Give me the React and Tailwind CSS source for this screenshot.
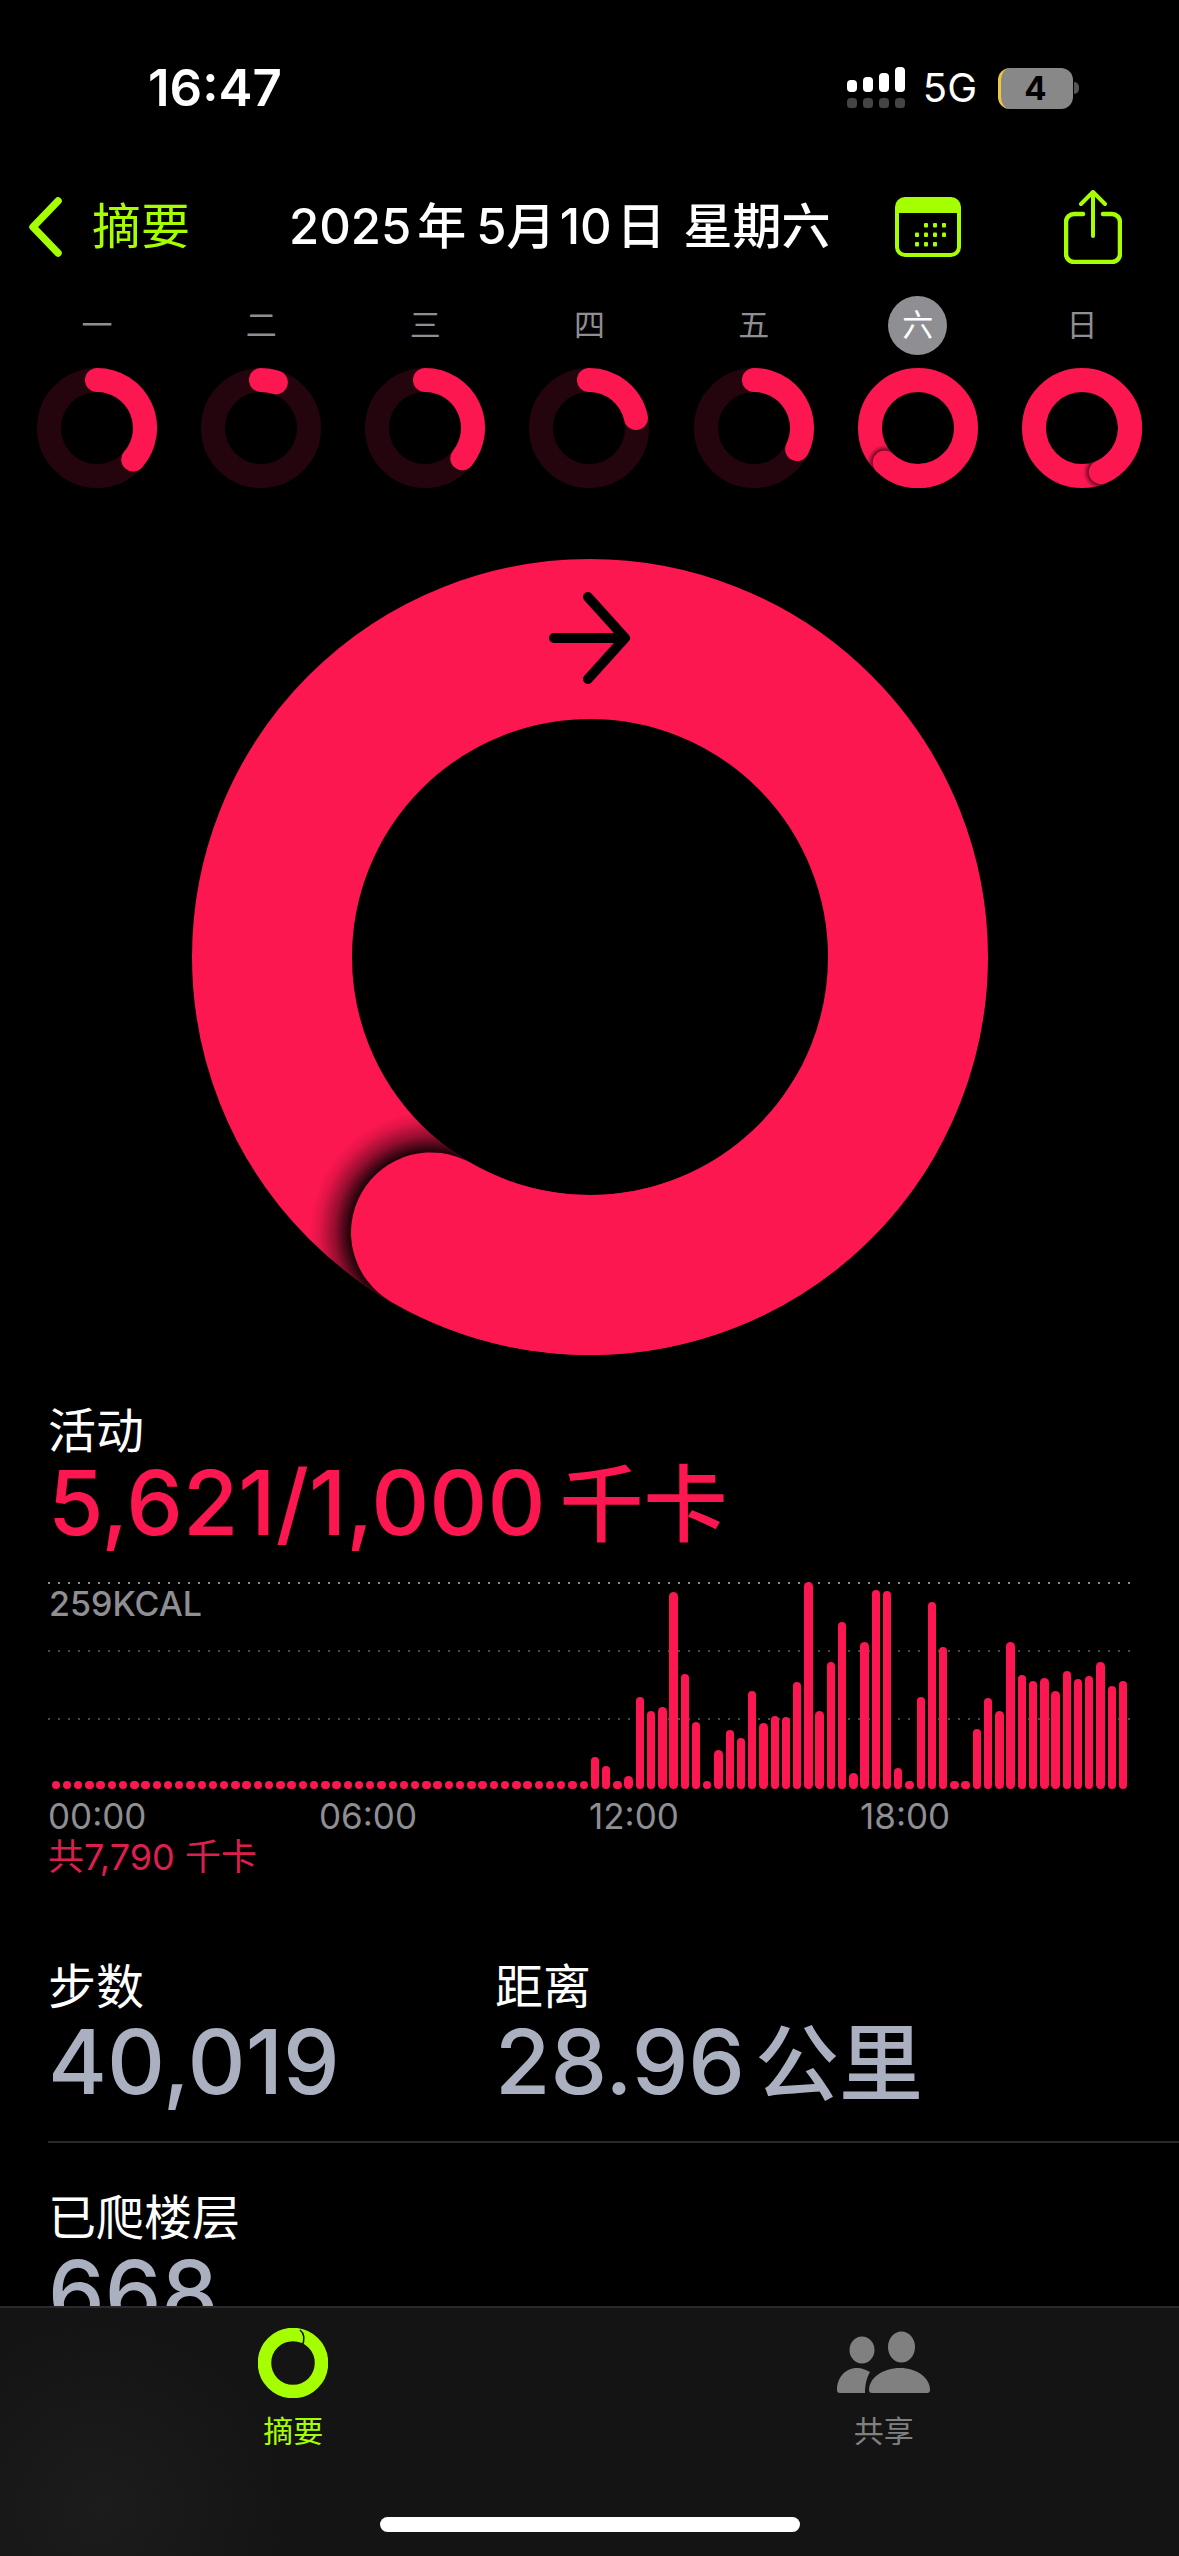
import React from "react";

const RED = "#fc1750";
const GREEN = "#a6ff00";
const FONT = "font-['Inter','Noto_Sans_CJK_SC',sans-serif]";

function pt(c, r, deg) {
  const a = ((deg - 90) * Math.PI) / 180;
  return [c + r * Math.cos(a), c + r * Math.sin(a)];
}
function arc(c, r, from, to) {
  const [x1, y1] = pt(c, r, from);
  const [x2, y2] = pt(c, r, to);
  const large = to - from > 180 ? 1 : 0;
  return `M${x1} ${y1}A${r} ${r} 0 ${large} 1 ${x2} ${y2}`;
}

function Ring({ size, stroke, end, id, track, shadow = 0.9 }) {
  const c = size / 2;
  const r = c - stroke / 2;
  const over = end > 360;
  const lap = end % 360;
  const [cx, cy] = pt(c, r, lap);
  const glow = stroke * 0.76;
  const edge = stroke / 2 / glow;
  return (
    <svg width={size} height={size} viewBox={`0 0 ${size} ${size}`} className="block shrink-0">
      <defs>
        <radialGradient id={`g${id}`}>
          <stop offset={edge} stopColor="#000" stopOpacity={shadow} />
          <stop offset={edge + (1 - edge) * 0.4} stopColor="#000" stopOpacity={shadow * 0.45} />
          <stop offset={edge + (1 - edge) * 0.75} stopColor="#000" stopOpacity={shadow * 0.12} />
          <stop offset="1" stopColor="#000" stopOpacity="0" />
        </radialGradient>
        <clipPath id={`c${id}`}>
          <path
            clipRule="evenodd"
            d={`M0 ${c}a${c} ${c} 0 1 0 ${size} 0a${c} ${c} 0 1 0 ${-size} 0zM${stroke} ${c}a${c - stroke} ${c - stroke} 0 1 0 ${size - 2 * stroke} 0a${c - stroke} ${c - stroke} 0 1 0 ${-(size - 2 * stroke)} 0z`}
          />
        </clipPath>
      </defs>
      <circle cx={c} cy={c} r={r} fill="none" stroke={over ? RED : track} strokeWidth={stroke} />
      {over ? (
        <>
          <g clipPath={`url(#c${id})`}>
            <circle cx={cx} cy={cy} r={glow} fill={`url(#g${id})`} />
          </g>
          <path d={arc(c, r, lap - 90, lap)} fill="none" stroke={RED} strokeWidth={stroke} strokeLinecap="round" />
        </>
      ) : (
        <path d={arc(c, r, 0, end)} fill="none" stroke={RED} strokeWidth={stroke} strokeLinecap="round" />
      )}
    </svg>
  );
}

const days = [
  ["一", 131],
  ["二", 18],
  ["三", 129],
  ["四", 78],
  ["五", 116],
  ["六", 584],
  ["日", 517],
];

const tops = [665, 595, 622, 665, 650, 415, 455, 445, 100, 345, 488, 665, 573, 513, 537, 397, 493, 472, 475, 370, 70, 455, 308, 190, 642, 250, 92, 95, 628, 665, 415, 130, 265, 665, 665, 510, 418, 456, 250, 348, 367, 356, 396, 335, 360, 351, 308, 380, 367];
const bars = [...Array(47).fill(8.4), ...tops.map((t) => (690 - t) / 3)];

function GridLine({ color }) {
  return <div className={`h-[2px] w-full bg-[length:10px_2px] ${color}`} />;
}

function Stat({ label, children, className = "" }) {
  return (
    <div className={className}>
      <div className="text-[48px] leading-[60px] text-white">{label}</div>
      <div className="text-[90px] leading-[90px] font-medium whitespace-nowrap text-[#aab0c0]">{children}</div>
    </div>
  );
}

export default function App() {
  return (
    <div className={`flex h-[2556px] w-[1179px] flex-col overflow-hidden bg-black ${FONT}`}>
      <div className="min-h-0 flex-1 overflow-hidden">
        {/* status bar */}
        <div className="flex h-[170px] items-start justify-between pt-[62px] pr-[100px] pl-[148px]">
          <span className="text-[51px] leading-[52px] font-semibold text-white">16:47</span>
          <div className="flex items-center pt-[5px]">
            <svg width="60" height="42" viewBox="0 0 60 42" className="mr-[16px]">
              <g fill="#fff">
                <rect x="0" y="13" width="10" height="12" rx="4" />
                <rect x="16" y="10" width="10" height="15" rx="4" />
                <rect x="32" y="6" width="10" height="19" rx="4" />
                <rect x="48" y="0" width="10" height="25" rx="4" />
              </g>
              <g fill="#444">
                <rect x="0" y="31" width="10" height="10" rx="3.5" />
                <rect x="16" y="31" width="10" height="10" rx="3.5" />
                <rect x="32" y="31" width="10" height="10" rx="3.5" />
                <rect x="48" y="31" width="10" height="10" rx="3.5" />
              </g>
            </svg>
            <span className="mr-[21px] text-[40px] leading-[42px] font-normal text-white">5G</span>
            <div className="flex h-[41px] w-[75px] items-center justify-center rounded-[12px] border-l-[3px] border-[#f0c840] bg-[#888888] pr-[3px] text-[33px] leading-none font-bold text-black">
              4
            </div>
            <div className="ml-[1px] h-[12px] w-[5px] rounded-r-full bg-[#555]" />
          </div>
        </div>

        {/* nav */}
        <div className="flex h-[114px] items-center pl-[28px]">
          <svg width="34" height="60" viewBox="0 0 34 60" className="mr-[30px] shrink-0">
            <path d="M30 4 5 30l25 26" fill="none" stroke={GREEN} strokeWidth="7.5" strokeLinecap="round" strokeLinejoin="round" />
          </svg>
          <span className="w-[197px] shrink-0 text-[49px] leading-[60px]" style={{ color: GREEN }}>摘要</span>
          <span className="w-[606px] shrink-0 text-[49px] leading-[60px] font-medium whitespace-nowrap text-white">
            2025
            <span className="ml-[6px]">年</span>
            <span className="ml-[10px]">5月</span>
            <span className="ml-[4px]">10</span>
            <span className="ml-[5px]">日</span>
            <span className="ml-[18px]">星期六</span>
          </span>
          <svg width="66" height="60" viewBox="0 0 66 60" className="mr-[103px] shrink-0">
            <rect x="2" y="2" width="62" height="56" rx="8" fill="none" stroke={GREEN} strokeWidth="4" />
            <path d="M2 16V10a8 8 0 0 1 8-8h46a8 8 0 0 1 8 8v6z" fill={GREEN} />
            <g fill={GREEN}>
              {[0, 1, 2].map((row) =>
                [0, 1, 2, 3].map((col) =>
                  row === 0 && col === 0 ? null : row === 2 && col === 3 ? null : (
                    <rect key={`${row}${col}`} x={20 + col * 9} y={26 + row * 9.5} width="4" height="4.5" rx="1" />
                  )
                )
              )}
            </g>
          </svg>
          <svg width="58" height="74" viewBox="0 0 58 74" className="shrink-0">
            <path d="M19 24h-9a8 8 0 0 0-8 8v32a8 8 0 0 0 8 8h38a8 8 0 0 0 8-8V32a8 8 0 0 0-8-8h-9" fill="none" stroke={GREEN} strokeWidth="4.5" strokeLinecap="round" />
            <path d="M29 46V3M17 14 29 2l12 12" fill="none" stroke={GREEN} strokeWidth="4" strokeLinecap="round" strokeLinejoin="round" />
          </svg>
        </div>

        {/* week */}
        <div className="mt-[12px] grid grid-cols-7 px-[15px]">
          {days.map(([d, end], i) => (
            <div key={d} className="flex flex-col items-center">
              <div
                className={`flex h-[59px] w-[59px] items-center justify-center rounded-full text-[31px] ${i === 5 ? "bg-[#8e8e93] text-white" : "text-[#8e8e93]"}`}
              >
                {d}
              </div>
              <div className="mt-[13px]">
                <Ring size={120} stroke={24} end={end} id={`d${i}`} track="#24040d" shadow={0.6} />
              </div>
            </div>
          ))}
        </div>

        {/* main ring */}
        <div className="mt-[71px] flex justify-center">
          <div className="relative h-[796px] w-[796px]">
            <Ring size={796} stroke={160} end={570} id="main" track="#24040d" />
            <svg width="84" height="96" viewBox="0 0 84 96" className="absolute top-[31px] left-[356px]">
              <path d="M6 48h70M40 7l37 41-37 41" fill="none" stroke="#000" strokeWidth="10" strokeLinecap="round" strokeLinejoin="round" />
            </svg>
          </div>
        </div>

        {/* activity */}
        <div className="mt-[46px] pl-[48px]">
          <div className="text-[48px] leading-[60px] text-white">活动</div>
          <div className="text-[90px] leading-[84px] font-medium whitespace-nowrap" style={{ color: RED }}>
            5,621/1,000
            <span className="ml-[14px] text-[84px]">千卡</span>
          </div>
        </div>

        {/* chart */}
        <div className="relative mt-[35px] ml-[48px] h-[207px] w-[1082px]">
          <div className="flex h-[138px] flex-col justify-between">
            <GridLine color="bg-[linear-gradient(to_right,#8a8a8a_2px,transparent_2px)]" />
            <GridLine color="bg-[linear-gradient(to_right,#4a4a4a_2px,transparent_2px)]" />
            <GridLine color="bg-[linear-gradient(to_right,#4a4a4a_2px,transparent_2px)]" />
          </div>
          <div className="absolute top-[2px] left-[1px] text-[34px] leading-[40px] font-medium text-[#8e8e93]">259KCAL</div>
          <div className="absolute right-0 bottom-0 left-[3.5px] flex h-[207px] items-end gap-[2.85px]">
            {bars.map((h, i) => (
              <div key={i} className="w-[8.4px] shrink-0 rounded-full" style={{ height: h, background: RED }} />
            ))}
          </div>
        </div>
        <div className="mt-[6px] grid w-[1130px] grid-cols-[271px_270px_271px_1fr] pl-[48px] text-[35px] leading-[42px] text-[#8e8e93]">
          <span>00:00</span>
          <span>06:00</span>
          <span>12:00</span>
          <span>18:00</span>
        </div>
        <div className="pl-[48px] text-[36px] leading-[40px] text-[#dc1f4d]">共7,790 千卡</div>

        {/* stats */}
        <div className="mt-[80px] flex pl-[48px]">
          <Stat label="步数" className="w-[447px]">40,019</Stat>
          <Stat label="距离">
            28.96
            <span className="ml-[10px] text-[84px]">公里</span>
          </Stat>
        </div>
        <div className="mt-[32px] ml-[48px] h-[2px] bg-[#2a2a2c]" />
        <Stat label="已爬楼层" className="mt-[45px] pl-[48px]">668</Stat>
      </div>

      {/* tab bar */}
      <div className="relative h-[250px] shrink-0 border-t-2 border-[#2a2a2a] bg-[radial-gradient(circle_at_100px_200px,#1c1c1c,#141414_190px)]">
        <div className="grid grid-cols-2 pt-[20px]">
          <div className="flex flex-col items-center pr-[3px]">
            <svg width="70" height="70" viewBox="0 0 70 70" className="block">
              <circle cx="35" cy="35" r="28.5" fill="none" stroke={GREEN} strokeWidth="13.5" />
              <path d="M42 2c4 3 5 9 2 17" fill="none" stroke="#141414" strokeWidth="1.5" />
            </svg>
            <span className="mt-[15px] text-[30px] leading-[36px]" style={{ color: GREEN }}>摘要</span>
          </div>
          <div className="flex flex-col items-center pr-[1px]">
            <svg width="94" height="70" viewBox="0 0 94 70" className="block">
              <g fill="#808080">
                <ellipse cx="25" cy="22" rx="12.5" ry="13.5" />
                <ellipse cx="64.5" cy="19" rx="13.5" ry="15.5" />
                <path d="M0 62c0-12 8-22 20-22 5 0 9 2 13 4-3 5-5 12-5 21H3c-2 0-3-1-3-3z" />
                <path d="M32 62c0-12 14-22 31-22s30 10 30 22c0 2-1 3-3 3H35c-2 0-3-1-3-3z" />
              </g>
            </svg>
            <span className="mt-[15px] text-[30px] leading-[36px] text-[#808080]">共享</span>
          </div>
        </div>
        <div className="absolute bottom-[24px] left-[380px] h-[15px] w-[420px] rounded-full bg-white" />
      </div>
    </div>
  );
}
